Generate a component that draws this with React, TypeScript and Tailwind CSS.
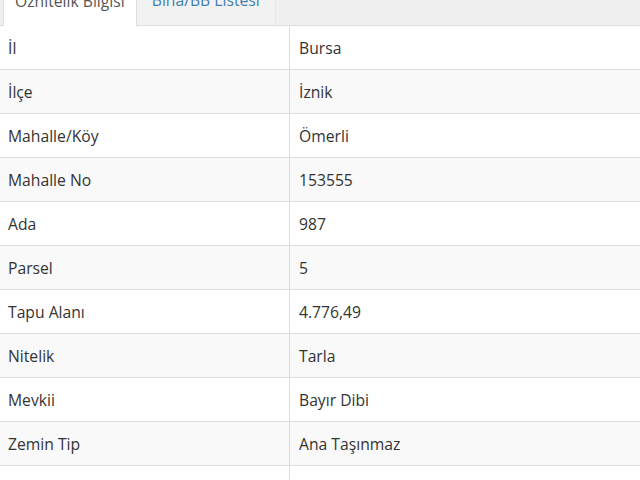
import * as React from "react";

const rows: [string, string][] = [
  ["İl", "Bursa"],
  ["İlçe", "İznik"],
  ["Mahalle/Köy", "Ömerli"],
  ["Mahalle No", "153555"],
  ["Ada", "987"],
  ["Parsel", "5"],
  ["Tapu Alanı", "4.776,49"],
  ["Nitelik", "Tarla"],
  ["Mevkii", "Bayır Dibi"],
  ["Zemin Tip", "Ana Taşınmaz"],
  ["Kat Mülkiyeti", "Kat Mülkiyeti Yok"],
];

export default function App() {
  return (
    <div
      className="h-[480px] w-[640px] overflow-hidden bg-white text-[15.7px] text-[#333]"
      style={{ fontFamily: '"Open Sans", "Noto Sans", sans-serif' }}
    >
      <div className="-mt-[24px] flex h-[50px] items-end border-b border-[#ddd] bg-[#efefef] pl-[3px]">
        <div className="relative -mb-px flex h-[50px] items-center border border-b-0 border-[#ddd] bg-white px-[11px] text-[#555]">
          Öznitelik Bilgisi
        </div>
        <div className="flex h-[49px] items-center border-r border-[#e6e6e6] bg-[#f2f2f2] px-[15px] text-[#3f7fb0]">
          Bina/BB Listesi
        </div>
      </div>
      <div>
        {rows.map(([k, v], i) => (
          <div
            key={k}
            className={
              "flex h-[44px] border-b border-[#ddd] pt-[2px] " +
              (i % 2 === 0 ? "bg-white" : "bg-[#f9f9f9]")
            }
          >
            <div className="-mt-[2px] flex w-[290px] items-center border-r border-[#ddd] pl-[8px] pt-[2px]">{k}</div>
            <div className="flex flex-1 items-center pl-[9px]">{v}</div>
          </div>
        ))}
      </div>
    </div>
  );
}
